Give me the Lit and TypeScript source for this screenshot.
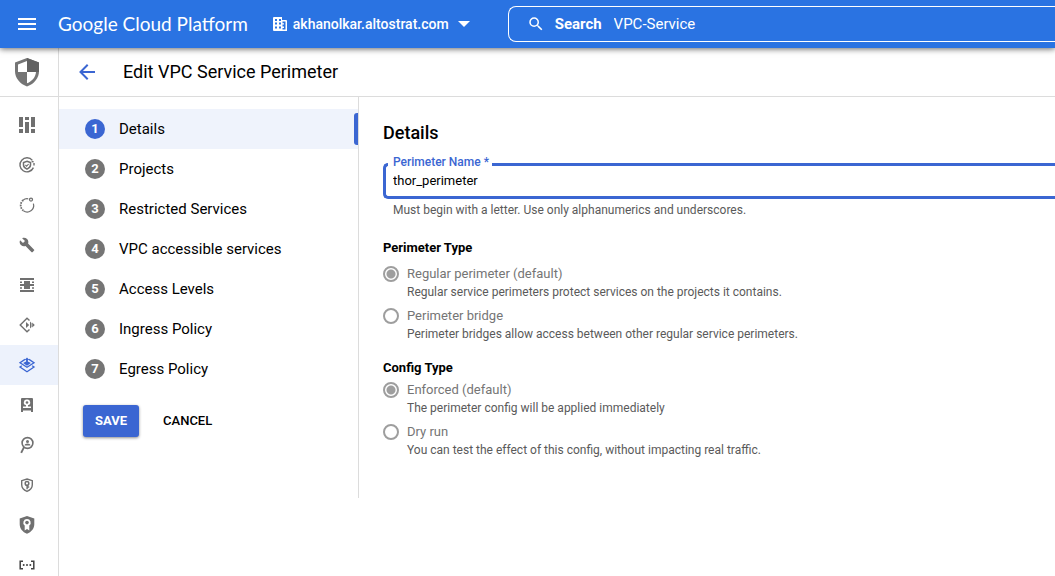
import { LitElement, html, css, svg } from "lit";
import { customElement, state } from "lit/decorators.js";
import { classMap } from "lit/directives/class-map.js";

const NAV = [
  {
    name: "Command center",
    art: svg`<path fill="currentColor" d="M0 0h4v10H0zM0 12h4v4H0zM6 0h4v3H6zM6 5h4v11H6zM12 0h4v10h-4zM12 12h4v4h-4z"/>`,
  },
  {
    name: "Threats",
    art: svg`<path fill="none" stroke="currentColor" stroke-width="1.4" d="M13.4 3.4A7 7 0 1 0 14.4 10.6M15 8.6V6M12.6 4.6l2 .2"/><path fill="none" stroke="currentColor" stroke-width="1.5" d="M8 4.2l3.5 1.3v2.6c0 2-1.5 3.2-3.5 4-2-.8-3.500-2-3.500-4V5.500z"/><path fill="none" stroke="currentColor" stroke-width="1.100" d="M6.400 8l1.200 1.200 2-2.200"/>`,
  },
  {
    name: "Assets",
    art: svg`<path fill="none" stroke="currentColor" stroke-width="1.200" d="M9.200 1.800A6.400 6.400 0 0 0 4 3.200M14.400 6.600A6.500 6.500 0 0 1 4.400 13.700"/><path fill="none" stroke="currentColor" stroke-width="1.800" stroke-dasharray="1.600 1" d="M4.200 3.200a6.500 6.500 0 0 0 .2 10.400"/><circle cx="12" cy="2.600" r="1.500" fill="none" stroke="currentColor" stroke-width="1.300"/>`,
  },
  {
    name: "Tools",
    art: svg`<path fill="currentColor" transform="scale(.667)" d="M22.700 19l-9.100-9.100c.9-2.300.4-5-1.500-6.900-2-2-5-2.400-7.400-1.300L9 6 6 9 1.600 4.700C.4 7.100.9 10.100 2.900 12.100c1.900 1.900 4.600 2.400 6.900 1.500l9.100 9.100c.4.4 1 .4 1.400 0l2.300-2.300c.5-.4.5-1.100.1-1.400z"/>`,
  },
  {
    name: "Firewall",
    art: svg`<path fill="currentColor" d="M1 1h14v2H1zM1 13h14v2H1zM5 4h6v8H5zM1 4.500h2v1.500H1zM13 4.500h2v1.500h-2zM1 7h14v2H1zM1 10.200h2v1.500H1zM13 10.200h2v1.500h-2z"/>`,
  },
  {
    name: "Proxy",
    art: svg`<path fill="none" stroke="currentColor" stroke-width="1.400" d="M10.500 3.600L8 1.200 1.200 8 8 14.800l2.500-2.400"/><path fill="currentColor" d="M7 5l3.200 3L7 11zM11 4.600L12.500 6v4L11 11.400zM13.200 5.600L15.800 8l-2.600 2.400z"/>`,
  },
  {
    name: "VPC Service Controls",
    active: true,
    art: svg`<path fill="none" stroke="currentColor" stroke-width="1.300" d="M6 2.400L1 5.700l7 4.600 7-4.600L10 2.400M2.800 8.800L1 10l7 4.700 7-4.700-1.800-1.200"/><path fill="currentColor" d="M8 .6l2.400 2.400H8.900v1.400l3 1.700L8 8.700 4.100 6.100l3-1.700V3H5.600z"/>`,
  },
  {
    name: "Access",
    art: svg`<path fill="currentColor" fill-rule="evenodd" d="M3 1h10a1 1 0 0 1 1 1v13h-2v-1.500H4V15H2V2a1 1 0 0 1 1-1zM8 2.600a2.900 2.900 0 0 0-1 5.700V9.500H4V11h8V9.500H9V8.300a2.900 2.900 0 0 0-1-5.700z"/><circle cx="8" cy="5.500" r="1.300" fill="currentColor"/>`,
  },
  {
    name: "Identity search",
    art: svg`<circle cx="8.500" cy="6" r="5.400" fill="none" stroke="currentColor" stroke-width="1.600"/><path fill="none" stroke="currentColor" stroke-width="1.900" d="M5 10.200L2.200 15.800"/><circle cx="8.500" cy="4.500" r="1.500" fill="currentColor"/><path fill="currentColor" d="M5.500 8.500c0-1.400 1.500-2.100 3-2.100s3 .7 3 2.100z"/>`,
  },
  {
    name: "Key management",
    art: svg`<path fill="none" stroke="currentColor" stroke-width="1.400" d="M8 2l5.300 1.700v4.100c0 3.200-2.300 5.400-5.300 6.600-3-1.200-5.300-3.400-5.300-6.600V3.700z"/><circle cx="8" cy="6.400" r="1.800" fill="none" stroke="currentColor" stroke-width="1.500"/><path fill="currentColor" d="M7.400 8h1.400v4.200H7.400zM8.800 9.200h1.400v1.600H8.800z"/>`,
  },
  {
    name: "Certificates",
    art: svg`<path fill="currentColor" fill-rule="evenodd" d="M8-1l7.300 2.600v5.600c0 4.300-2.900 7.700-7.300 9.600-4.400-1.900-7.300-5.300-7.300-9.600V1.600zM8 2a3.700 3.700 0 0 0-2.300 6.600V13.400L8 12l2.300 1.400V8.600A3.700 3.700 0 0 0 8 2z"/><circle cx="8" cy="5.600" r="1.800" fill="currentColor"/>`,
  },
  {
    name: "Secrets",
    dark: true,
    art: svg`<path fill="none" stroke="currentColor" stroke-width="1.500" d="M4 4.300H1.200v7.400H4M12 4.300h2.800v7.400H12"/><circle cx="4.700" cy="8" r="1" fill="currentColor"/><circle cx="8" cy="8" r="1" fill="currentColor"/><circle cx="11.300" cy="8" r="1" fill="currentColor"/>`,
  },
];

const STEPS = [
  "Details",
  "Projects",
  "Restricted Services",
  "VPC accessible services",
  "Access Levels",
  "Ingress Policy",
  "Egress Policy",
];

const GROUPS = [
  {
    id: "perimeter",
    title: "Perimeter Type",
    options: [
      ["Regular perimeter (default)", "Regular service perimeters protect services on the projects it contains."],
      ["Perimeter bridge", "Perimeter bridges allow access between other regular service perimeters."],
    ],
  },
  {
    id: "config",
    title: "Config Type",
    options: [
      ["Enforced (default)", "The perimeter config will be applied immediately"],
      ["Dry run", "You can test the effect of this config, without impacting real traffic."],
    ],
  },
];

@customElement("gcp-header")
class GcpHeader extends LitElement {
  static styles = css`
    :host {
      display: flex;
      align-items: center;
      height: 48px;
      background: #2a73e2;
      color: #fff;
      box-shadow: 0 1px 6px rgba(0, 0, 0, 0.6);
      position: relative;
      z-index: 1;
      font-family: Roboto, sans-serif;
    }
    button {
      border: 0;
      padding: 0;
      background: none;
      color: inherit;
      font: inherit;
      display: flex;
      align-items: center;
    }
    svg {
      display: block;
      flex: none;
    }
    .menu {
      padding: 0 18px;
    }
    .brand {
      flex: none;
      margin-left: 4px;
      font: 400 19px/24px Lato, sans-serif;
      color: inherit;
      text-decoration: none;
      white-space: nowrap;
    }
    .project {
      flex: none;
      margin-left: 24px;
      gap: 5px;
      font-size: 14px;
      font-weight: 500;
      line-height: 20px;
    }
    .project .caret {
      margin-left: 4px;
    }
    .search {
      flex: 1;
      min-width: 0;
      display: flex;
      align-items: center;
      height: 34px;
      margin-left: 38px;
      padding-left: 18px;
      border: 1px solid #fff;
      border-right: 0;
      border-radius: 8px 0 0 8px;
      font-size: 15px;
      line-height: 20px;
    }
    .search label {
      font-weight: 700;
      margin: 0 12px 0 10px;
    }
    .search input {
      flex: 1;
      min-width: 0;
      border: 0;
      padding: 0;
      outline: 0;
      background: none;
      color: inherit;
      font: inherit;
    }
  `;

  render() {
    return html`
      <button class="menu" aria-label="Main menu">
        <svg width="18" height="12" viewBox="0 0 18 12"><path fill="#fff" d="M0 0h18v2H0zM0 5h18v2H0zM0 10h18v2H0z" /></svg>
      </button>
      <a class="brand" href="#">Google Cloud Platform</a>
      <button class="project">
        <svg width="16" height="16" viewBox="0 0 16 16">
          <path fill="#fff" fill-rule="evenodd" d="M2 1h8v3h4a1 1 0 0 1 1 1v10H2a1 1 0 0 1-1-1V2a1 1 0 0 1 1-1zM3 3v2h2V3zM7 3v2h2V3zM3 6.500v2h2v-2zM7 6.500v2h2v-2zM3 10.500v2h2v-2zM7 10.500v2h2v-2zM10.500 5.500v1.700H12v1.300h-1.500v2H12V12h-1.500v1.500h3v-8z" />
        </svg>
        <span>akhanolkar.altostrat.com</span>
        <svg class="caret" width="12" height="6" viewBox="0 0 12 6"><path fill="#fff" d="M0 0h12L6 6z" /></svg>
      </button>
      <div class="search">
        <svg width="18" height="18" viewBox="0 0 24 24">
          <path fill="#fff" d="M15.500 14h-.79l-.28-.27A6.471 6.471 0 0 0 16 9.500 6.500 6.500 0 1 0 9.500 16c1.610 0 3.090-.59 4.230-1.570l.27.28v.79l5 4.990L20.490 19l-4.990-5zm-6 0C7.010 14 5 11.990 5 9.500S7.010 5 9.500 5 14 7.010 14 9.500 11.990 14 9.500 14z" />
        </svg>
        <label for="q">Search</label>
        <input id="q" type="text" value="VPC-Service" />
      </div>
    `;
  }
}

@customElement("gcp-rail")
class GcpRail extends LitElement {
  static styles = css`
    :host {
      display: block;
      flex: none;
      width: 58px;
      border-right: 1px solid #dcdcdc;
      overflow: hidden;
    }
    .product {
      display: flex;
      justify-content: center;
      align-items: center;
      height: 48px;
      padding-right: 4px;
      border-bottom: 1px solid #dcdcdc;
      margin-bottom: 8px;
    }
    a {
      display: flex;
      justify-content: center;
      align-items: center;
      height: 40px;
      padding-right: 4px;
      color: #707070;
    }
    a.active {
      background: #edf2fc;
      color: #3b66d2;
    }
    a.dark {
      color: #424242;
    }
    svg {
      display: block;
      overflow: visible;
    }
  `;

  render() {
    return html`
      <div class="product">
        <svg width="24" height="30" viewBox="0 0 24 30">
          <path fill="#757575" d="M12 1l12 4.500V14c0 7-4.600 12.800-12 15.500C4.600 26.800 0 21 0 14V5.500z" />
          <path fill="#fff" d="M12 4v11H3V7.400zM12 15h9c-.4 5-3.600 9.200-9 11.300z" />
          <path fill="#616161" d="M12 1l12 4.500V14l-.1 1H12z" />
        </svg>
      </div>
      <nav aria-label="Security">
        ${NAV.map(
          (n) => html`<a href="#" aria-label=${n.name} class=${classMap({ active: !!n.active, dark: !!n.dark })}>
            <svg width="16" height="16" viewBox="0 0 16 16">${n.art}</svg>
          </a>`
        )}
      </nav>
    `;
  }
}

@customElement("perimeter-steps")
class PerimeterSteps extends LitElement {
  @state() private current = 0;

  static styles = css`
    :host {
      display: block;
      flex: none;
      box-sizing: border-box;
      width: 300px;
      padding: 12px 0 61px;
      border-right: 1px solid #dcdcdc;
    }
    button {
      border: 0;
      background: none;
      color: #000;
      font-family: inherit;
      cursor: pointer;
    }
    .step {
      position: relative;
      display: flex;
      align-items: center;
      gap: 14px;
      width: 100%;
      height: 40px;
      padding: 0 26px;
      font-size: 15px;
      line-height: 20px;
      text-align: left;
    }
    .step.on {
      background: #eff3fc;
    }
    .step.on::after {
      content: "";
      position: absolute;
      right: 0;
      top: 4px;
      bottom: 4px;
      width: 4px;
      border-radius: 3px 0 0 3px;
      background: #3b66d2;
    }
    .num {
      width: 20px;
      height: 20px;
      border-radius: 50%;
      background: #757575;
      color: #fff;
      font-size: 13px;
      font-weight: 700;
      text-align: center;
    }
    .on .num {
      background: #3b66d2;
    }
    .actions {
      display: flex;
      gap: 12px;
      padding: 16px 24px 0;
    }
    .actions button {
      height: 32px;
      padding: 0 12px;
      border-radius: 3px;
      font-size: 13px;
      font-weight: 500;
      line-height: 20px;
    }
    .actions .save {
      background: #3b66d2;
      color: #fff;
      font-weight: 700;
      box-shadow: 0 1px 3px rgba(0, 0, 0, 0.45);
    }
  `;

  render() {
    return html`
      ${STEPS.map(
        (s, i) => html`<button class=${classMap({ step: true, on: i === this.current })} @click=${() => (this.current = i)}>
          <span class="num">${i + 1}</span><span>${s}</span>
        </button>`
      )}
      <div class="actions">
        <button class="save">SAVE</button>
        <button>CANCEL</button>
      </div>
    `;
  }
}

@customElement("perimeter-form")
class PerimeterForm extends LitElement {
  static styles = css`
    :host {
      display: block;
      flex: 1;
      min-width: 0;
      padding: 24px 0 24px 24px;
    }
    h2 {
      margin: 0 0 18px;
      font-size: 18px;
      font-weight: 500;
      line-height: 24px;
    }
    .field {
      position: relative;
      height: 30px;
      border: 3px solid #3b66d2;
      border-right: 0;
      border-radius: 5px 0 0 5px;
    }
    .field label {
      position: absolute;
      left: 2px;
      top: -12px;
      padding: 0 3px 0 5px;
      background: #fff;
      color: #3b66d2;
      font-size: 12px;
      font-weight: 500;
      line-height: 16px;
    }
    .field input {
      display: block;
      box-sizing: border-box;
      width: 100%;
      height: 28px;
      padding: 0 7px;
      border: 0;
      outline: 0;
      background: none;
      color: #000;
      font: 400 13px/20px Roboto, sans-serif;
    }
    .hint,
    .desc {
      margin: 0;
      color: #5a5a5a;
      font-size: 12px;
      line-height: 16px;
    }
    .hint {
      padding: 3px 10px 0;
    }
    fieldset {
      margin: 20px 0 0;
      padding: 0;
      border: 0;
      min-width: 0;
    }
    fieldset + fieldset {
      margin-top: 16px;
    }
    legend {
      padding: 0;
      font-size: 13px;
      font-weight: 700;
      line-height: 20px;
    }
    .options {
      display: grid;
      gap: 6px;
      padding-top: 6px;
    }
    .options.tight {
      padding-top: 2px;
    }
    .option {
      display: grid;
      grid-template-columns: 16px 1fr;
      column-gap: 8px;
      align-items: center;
    }
    .option label {
      color: #757575;
      font-size: 13px;
      line-height: 20px;
    }
    .desc {
      grid-column: 2;
    }
    input[type="radio"] {
      appearance: none;
      box-sizing: border-box;
      width: 16px;
      height: 16px;
      margin: 0;
      border: 2px solid #9e9e9e;
      border-radius: 50%;
      background: #fff;
    }
    input[type="radio"]:checked {
      background: radial-gradient(circle, #9e9e9e 4px, #fff 5px);
    }
  `;

  render() {
    return html`
      <h2>Details</h2>
      <div class="field">
        <label for="name">Perimeter Name *</label>
        <input id="name" type="text" value="thor_perimeter" aria-describedby="hint" />
      </div>
      <p class="hint" id="hint">Must begin with a letter. Use only alphanumerics and underscores.</p>
      ${GROUPS.map(
        (g) => html`<fieldset>
          <legend>${g.title}</legend>
          <div class=${classMap({ options: true, tight: g.id === "config" })}>
            ${g.options.map(
              ([label, desc], i) => html`<div class="option">
                <input type="radio" disabled name=${g.id} id=${g.id + i} ?checked=${i === 0} />
                <label for=${g.id + i}>${label}</label>
                <p class="desc">${desc}</p>
              </div>`
            )}
          </div>
        </fieldset>`
      )}
    `;
  }
}

@customElement("app-root")
class AppRoot extends LitElement {
  static styles = css`
    :host {
      display: flex;
      flex-direction: column;
      height: 100vh;
      overflow: hidden;
      background: #fff;
      color: #000;
      font-family: Roboto, sans-serif;
    }
    gcp-header {
      flex: none;
    }
    .body {
      flex: 1;
      min-height: 0;
      display: flex;
    }
    main {
      flex: 1;
      min-width: 0;
    }
    .title {
      display: flex;
      align-items: center;
      gap: 28px;
      height: 48px;
      padding-left: 20px;
      border-bottom: 1px solid #dcdcdc;
    }
    .title a,
    .title svg {
      display: block;
    }
    h1 {
      margin: 0;
      font-size: 18px;
      font-weight: 400;
      line-height: 24px;
    }
    .columns {
      display: flex;
      align-items: flex-start;
    }
  `;

  render() {
    return html`
      <gcp-header></gcp-header>
      <div class="body">
        <gcp-rail></gcp-rail>
        <main>
          <div class="title">
            <a href="#" aria-label="Back">
              <svg width="16" height="16" viewBox="0 0 16 16"><path fill="none" stroke="#3b66d2" stroke-width="2" d="M16 8H1.500M8.700.8L1.500 8l7.200 7.200" /></svg>
            </a>
            <h1>Edit VPC Service Perimeter</h1>
          </div>
          <div class="columns">
            <perimeter-steps></perimeter-steps>
            <perimeter-form></perimeter-form>
          </div>
        </main>
      </div>
    `;
  }
}
